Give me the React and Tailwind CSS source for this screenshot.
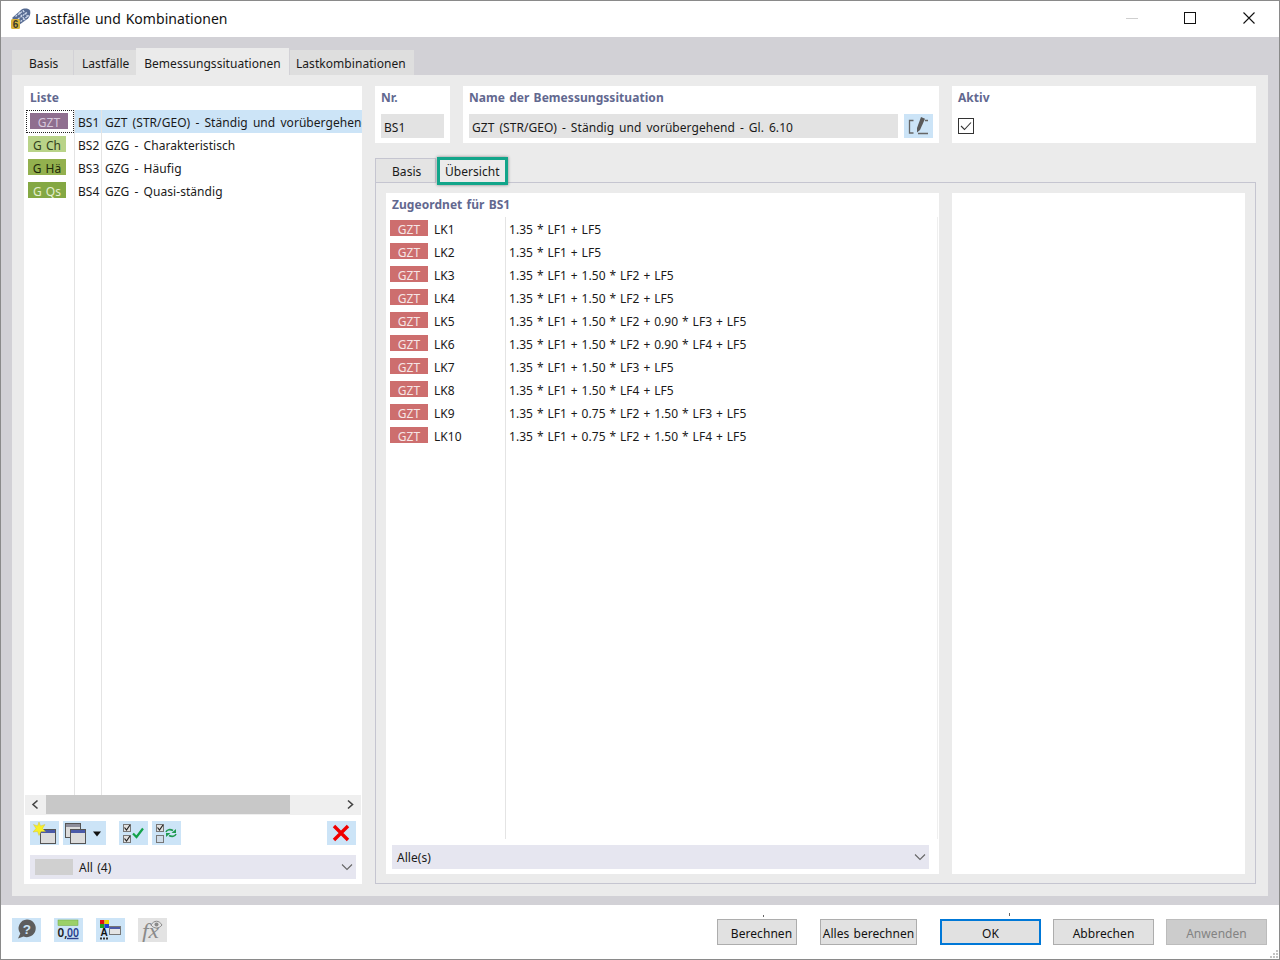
const font = { fontFamily: '"Noto Sans", sans-serif' };

const listRows = [
  { b: "GZT", bg: "bg-[#8f6f8f]", fg: "text-[#d8c8dc]", n: "BS1", t: "GZT (STR/GEO) - Ständig und vorübergehend - Gl. 6.10", sel: true },
  { b: "G Ch", bg: "bg-[#b9d388]", fg: "text-[#33401c]", n: "BS2", t: "GZG - Charakteristisch" },
  { b: "G Hä", bg: "bg-[#93b04e]", fg: "text-[#1f2a0a]", n: "BS3", t: "GZG - Häufig" },
  { b: "G Qs", bg: "bg-[#84a843]", fg: "text-[#e4efd0]", n: "BS4", t: "GZG - Quasi-ständig" },
];

const combos = [
  ["LK1", "1.35 * LF1 + LF5"],
  ["LK2", "1.35 * LF1 + LF5"],
  ["LK3", "1.35 * LF1 + 1.50 * LF2 + LF5"],
  ["LK4", "1.35 * LF1 + 1.50 * LF2 + LF5"],
  ["LK5", "1.35 * LF1 + 1.50 * LF2 + 0.90 * LF3 + LF5"],
  ["LK6", "1.35 * LF1 + 1.50 * LF2 + 0.90 * LF4 + LF5"],
  ["LK7", "1.35 * LF1 + 1.50 * LF3 + LF5"],
  ["LK8", "1.35 * LF1 + 1.50 * LF4 + LF5"],
  ["LK9", "1.35 * LF1 + 0.75 * LF2 + 1.50 * LF3 + LF5"],
  ["LK10", "1.35 * LF1 + 0.75 * LF2 + 1.50 * LF4 + LF5"],
];

function Chevron() {
  return (
    <svg width="12" height="8" viewBox="0 0 12 8" fill="none" stroke="#666" strokeWidth="1.1">
      <path d="M1 1.5 L6 6.5 L11 1.5" />
    </svg>
  );
}

function Win({ x, y, w = 15, h = 14, bar = "#4a5aa8" }) {
  return (
    <g>
      <rect x={x + 0.5} y={y + 0.5} width={w} height={h} fill="#dcdcdc" stroke="#555" />
      <rect x={x + 1} y={y + 1} width={w - 1} height="3" fill={bar} />
    </g>
  );
}

function NewIcon() {
  return (
    <svg width="29" height="24" viewBox="0 0 29 24">
      <Win x={10} y={8} />
      <path d="M9 1 L10.5 5 L15 3.5 L12.5 7.5 L15.5 10.5 L11 10.5 L9 14.5 L7.5 10.5 L3 11 L6 7.5 L3.5 3.5 L7.5 5 Z" fill="#f7f02a" stroke="#d0c020" strokeWidth="0.4" />
    </svg>
  );
}

function CopyIcon() {
  return (
    <svg width="43" height="24" viewBox="0 0 43 24">
      <Win x={2} y={2} bar="#8d8d9a" />
      <Win x={7} y={8} w={15} h={14} />
      <path d="M30 10.5 H38 L34 15.5 Z" fill="#111" />
    </svg>
  );
}

function Box({ x, y, checked }) {
  return (
    <g>
      <rect x={x + 0.5} y={y + 0.5} width="7" height="7" fill={checked ? "#e0e0e0" : "#cfdce8"} stroke="#777" />
      {checked && <path d={`M${x + 1.5} ${y + 3.5} L${x + 3.5} ${y + 6} L${x + 7} ${y + 1}`} fill="none" stroke="#222" strokeWidth="1.2" />}
    </g>
  );
}

function CheckAllIcon() {
  return (
    <svg width="29" height="24" viewBox="0 0 29 24">
      <Box x={4} y={3} checked />
      <Box x={4} y={14} checked />
      <path d="M14 12.5 L17.5 16 L24 7.5" fill="none" stroke="#12a24a" strokeWidth="2.2" />
    </svg>
  );
}

function SwapIcon() {
  return (
    <svg width="29" height="24" viewBox="0 0 29 24">
      <Box x={4} y={3} checked />
      <Box x={4} y={14} />
      <path d="M14 11 C15 8.5 18 8 21 9.5" fill="none" stroke="#1f9a50" strokeWidth="1.6" />
      <path d="M24 8 V12 H19.5 Z" fill="#1f9a50" />
      <path d="M24 13 C23 15.5 20 16 17 14.5" fill="none" stroke="#1f9a50" strokeWidth="1.6" />
      <path d="M14 16 V12 H18.5 Z" fill="#1f9a50" />
    </svg>
  );
}

function DeleteIcon() {
  return (
    <svg width="29" height="24" viewBox="0 0 29 24">
      <path d="M7 5 L21 19 M21 5 L7 19" stroke="#f00000" strokeWidth="3.4" />
    </svg>
  );
}

function EditIcon() {
  return (
    <svg width="29" height="24" viewBox="0 0 29 24">
      <path d="M9.5 6.5 H5.5 V19 H9.5 M14 19.5 H24 M21 6.5 H24" fill="none" stroke="#666" strokeWidth="1.3" />
      <path d="M17 3 L21 4.8 L16 16 L13 18.5 L13 14 Z" fill="#5a5a5a" />
    </svg>
  );
}

function HelpIcon() {
  return (
    <svg width="29" height="24" viewBox="0 0 29 24">
      <path d="M15 1.5 A8.8 8.8 0 1 1 11.5 18.4 L6 20.5 L8.3 15.5 A8.8 8.8 0 0 1 15 1.5 Z" fill="#5d5d5d" />
      <text x="15" y="15.5" textAnchor="middle" fontSize="13.5" fontWeight="700" fill="#cce4f7" fontFamily="Liberation Sans, sans-serif">?</text>
    </svg>
  );
}

function UnitsIcon() {
  return (
    <svg width="29" height="24" viewBox="0 0 29 24">
      <rect x="4" y="2" width="20" height="5.5" fill="#9bd068" stroke="#6ea640" strokeWidth="0.5" />
      <text x="3.5" y="18.5" fontSize="13" fontWeight="600" fill="#222" fontFamily="Noto Sans, sans-serif" textLength="10" lengthAdjust="spacingAndGlyphs">0,</text>
      <text x="13" y="18.5" fontSize="13" fontWeight="600" fill="#2b3f8c" fontFamily="Noto Sans, sans-serif" textLength="12" lengthAdjust="spacingAndGlyphs">00</text>
      <path d="M13 20.5 H24.5" stroke="#2b3f8c" strokeWidth="1.4" />
    </svg>
  );
}

function ColorsIcon() {
  return (
    <svg width="29" height="24" viewBox="0 0 29 24">
      <rect x="4" y="2" width="4.5" height="4" fill="#e01010" />
      <rect x="8.5" y="2" width="4.5" height="4" fill="#e8d800" />
      <rect x="4" y="6" width="4.5" height="4" fill="#20a020" />
      <rect x="8.5" y="6" width="4.5" height="4" fill="#2040d0" />
      <text x="4.5" y="18" fontSize="10" fontWeight="700" fill="#111" fontFamily="Liberation Sans, sans-serif">A</text>
      <path d="M4 20.5 H13" stroke="#333" strokeWidth="2" strokeDasharray="2 1" />
      <rect x="13.5" y="8.5" width="11" height="8" fill="#e4e4e4" stroke="#777" />
      <rect x="14" y="9" width="10" height="2" fill="#4a5aa8" />
    </svg>
  );
}

function FxIcon() {
  return (
    <svg width="29" height="24" viewBox="0 0 29 24">
      <text x="4" y="20" fontSize="20" fontStyle="italic" fill="#8a8a8a" fontFamily="Liberation Serif, serif" textLength="17" lengthAdjust="spacingAndGlyphs">fx</text>
      <path d="M13 7 C16 2 21 2 24 7 C21 11 16 11 13 7 Z" fill="none" stroke="#8a8a8a" />
      <circle cx="18.5" cy="6.5" r="2" fill="#8a8a8a" />
    </svg>
  );
}

function AppIcon() {
  return (
    <svg width="22" height="22" viewBox="0 0 22 22">
      <path d="M3 10 L12 2 C14.5 0 19.5 0 21 2.5 C22 5.5 20.5 9 19 10.5 L10 17 Z" fill="#566b92" />
      <path d="M6.5 8.5 L14.5 2.5 M9 11 L18 4.5 M11.5 13.5 L20 7.5 M10 4.5 L16 12 M14 2.5 L19.5 9.5" stroke="#cdd8ea" strokeWidth="1.3" strokeDasharray="2 1" />
      <rect x="2" y="11" width="9" height="10" rx="1.5" fill="#d8b23a" />
      <text x="6.5" y="19.5" textAnchor="middle" fontSize="10" fontWeight="700" fill="#3a3a2a" fontFamily="Liberation Sans, sans-serif">6</text>
    </svg>
  );
}

function IconBtn({ children, w = "w-[29px]", gray }) {
  return <div className={`${w} h-6 flex items-center justify-center ${gray ? "bg-[#e3e3e3]" : "bg-[#cce4f7]"}`}>{children}</div>;
}

function Label({ children, className = "" }) {
  return <div className={`font-bold text-[12px] leading-[18px] text-[#62688f] ${className}`}>{children}</div>;
}

function FootBtn({ children, w, kind, pad = "" }) {
  const base = "h-[26px] flex items-center justify-center whitespace-nowrap pt-[4px] ";
  const styles =
    kind === "ok"
      ? "border-2 border-[#0078d7] bg-[#e1e1e1] text-[#111]"
      : kind === "off"
      ? "border border-[#bcbcbc] bg-[#cccccc] text-[#838383]"
      : "border border-[#adadad] bg-[#e1e1e1] text-[#111]";
  return <div className={`${base}${styles} ${w} ${pad}`}>{children}</div>;
}

export default function App() {
  return (
    <div style={font} className="w-[1280px] h-[960px] bg-white border border-[#8a8a8a] flex flex-col overflow-hidden text-[12px] leading-[18px] tracking-[0.05px] [word-spacing:1px] text-[#1a1a1a]">
      {/* Title bar */}
      <div className="h-[36px] shrink-0 flex items-center bg-white">
        <div className="ml-[8px] w-[22px] h-[22px]"><AppIcon /></div>
        <div className="ml-[4px] text-[14px] text-[#111] -mt-[1px]">Lastfälle und Kombinationen</div>
        <div className="ml-auto flex items-center -mt-[2px]">
          <div className="w-[12px] h-px bg-[#cfcfcf] mr-[46px]" />
          <div className="w-[12px] h-[12px] border-[1.5px] border-[#111] mr-[47px]" />
          <svg className="mr-[24px]" width="12" height="12" viewBox="0 0 12 12" stroke="#111" strokeWidth="1.1"><path d="M0.5 0.5 L11.5 11.5 M11.5 0.5 L0.5 11.5" /></svg>
        </div>
      </div>

      {/* Main gray band */}
      <div className="h-[868px] shrink-0 bg-[#d2d1d6] px-[11px] pt-[11px] pr-[11px] flex flex-col">
        {/* Tabs */}
        <div className="flex items-end h-[27px] shrink-0">
          <div className="w-[61px] h-[25px] bg-[#dedede] flex items-center pl-[17px] pt-[3px]">Basis</div>
          <div className="w-[62px] ml-px h-[25px] bg-[#dedede] flex items-center pl-[8px] pt-[3px]">Lastfälle</div>
          <div className="w-[153px] h-[27px] bg-[#ebebeb] flex items-center justify-center pt-[4px]">Bemessungssituationen</div>
          <div className="w-[124px] ml-px h-[25px] bg-[#dedede] flex items-center pl-[6px] pt-[3px]">Lastkombinationen</div>
        </div>
        {/* Panel */}
        <div className="w-[1256px] h-[821px] bg-[#ebebeb] pl-[12px] pt-[11px] flex gap-[13px]">
          {/* Liste */}
          <div className="w-[338px] h-[798px] bg-white flex flex-col">
            <Label className="ml-[6px] pt-[3px] h-[24px] shrink-0">Liste</Label>
            <div className="relative flex-1 min-h-0 overflow-hidden flex ml-0">
              <div className="w-[51px] border-r border-[#e4e4e4] shrink-0 flex flex-col">
                {listRows.map((r) => (
                  <div key={r.n} className={`h-[23px] flex items-start pt-[3px] pl-[4px] ${r.sel ? "outline-1 outline-dotted outline-[#222] -outline-offset-1 w-[48px] ml-[2px] pl-[2px]" : ""}`}>
                    <div className={`w-[38px] h-[16px] flex items-start justify-center pt-px ${r.bg} ${r.fg}`}>{r.b}</div>
                  </div>
                ))}
              </div>
              <div className="flex-1 min-w-0 flex flex-col relative">
                {listRows.map((r) => (
                  <div key={r.n} className={`h-[23px] flex items-center whitespace-nowrap overflow-hidden ${r.sel ? "bg-[#cce4f7]" : ""}`}>
                    <div className="w-[27px] shrink-0 pl-[3px] pt-[3px] border-r border-[#e4e4e4] h-full flex items-center">{r.n}</div>
                    <div className="pl-[3px] pt-[3px] [word-spacing:2px]">{r.t}</div>
                  </div>
                ))}
                <div className="flex-1 w-[27px] border-r border-[#e4e4e4]" />
              </div>
            </div>
            {/* scrollbar */}
            <div className="h-[20px] shrink-0 mx-px bg-[#efefef] flex items-start mb-[6px]">
              <svg width="21" height="20" viewBox="0 0 21 20" fill="none" stroke="#444" strokeWidth="1.6"><path d="M12.5 5.5 L8 9.5 L12.5 13.5" /></svg>
              <div className="w-[244px] h-[19px] bg-[#c8c8c8]" />
              <svg className="ml-auto" width="21" height="20" viewBox="0 0 21 20" fill="none" stroke="#444" strokeWidth="1.6"><path d="M8 5.5 L12.5 9.5 L8 13.5" /></svg>
            </div>
            {/* toolbar */}
            <div className="h-[24px] shrink-0 flex items-center ml-[6px] mr-[6px]">
              <IconBtn><NewIcon /></IconBtn>
              <div className="ml-[4px]"><IconBtn w="w-[43px]"><CopyIcon /></IconBtn></div>
              <div className="ml-[13px]"><IconBtn><CheckAllIcon /></IconBtn></div>
              <div className="ml-[4px]"><IconBtn><SwapIcon /></IconBtn></div>
              <div className="ml-auto"><IconBtn><DeleteIcon /></IconBtn></div>
            </div>
            {/* combo */}
            <div className="h-[24px] shrink-0 mt-[10px] mx-[6px] mb-[5px] bg-[#e6e6f0] flex items-center pl-[5px] pr-[3px]">
              <div className="w-[38px] h-[16px] bg-[#d0d0d0]" />
              <div className="ml-[6px] pt-px">All (4)</div>
              <div className="ml-auto flex"><Chevron /></div>
            </div>
          </div>

          {/* Right */}
          <div className="w-[881px] flex flex-col">
            <div className="flex gap-[13px] h-[57px] shrink-0">
              <div className="w-[75px] bg-white px-[6px] pt-[3px]">
                <Label className="h-[25px]">Nr.</Label>
                <div className="w-[63px] h-[24px] bg-[#e3e3e3] flex items-center pl-[3px] pt-[4px]">BS1</div>
              </div>
              <div className="w-[476px] bg-white px-[6px] pt-[3px]">
                <Label className="h-[25px]">Name der Bemessungssituation</Label>
                <div className="flex">
                  <div className="w-[429px] h-[24px] bg-[#e3e3e3] flex items-center pl-[3px] pt-[4px] [word-spacing:1.8px]">GZT (STR/GEO) - Ständig und vorübergehend - Gl. 6.10</div>
                  <div className="ml-[6px]"><IconBtn><EditIcon /></IconBtn></div>
                </div>
              </div>
              <div className="w-[304px] bg-white px-[6px] pt-[3px]">
                <Label className="h-[29px]">Aktiv</Label>
                <div className="w-[16px] h-[16px] border border-[#333] flex items-center justify-center">
                  <svg width="12" height="10" viewBox="0 0 12 10" fill="none" stroke="#333" strokeWidth="1.1"><path d="M1 5 L4.5 8.5 L11 1.5" /></svg>
                </div>
              </div>
            </div>

            {/* Sub tabs */}
            <div className="flex h-[25px] mt-[15px] shrink-0 relative z-10">
              <div className="w-[61px] h-[25px] bg-[#e4e4e4] border border-[#c5c5d0] flex items-center pl-[16px] pt-[3px]">Basis</div>
              <div className="relative w-[72px] h-[25px] bg-[#ebebeb] flex items-center pl-[9px] pt-[3px] text-[#1a1a1a]">
                Übersicht
                <div className="absolute left-[1px] top-[-1px] w-[71px] h-[28px] border-[3px] border-[#12a58a] shadow-[0_0_3px_rgba(0,0,0,0.45)]" />
              </div>
            </div>
            <div className="w-[881px] h-[702px] -mt-px border border-[#c5c5d0] pl-[10px] pt-[10px] flex gap-[13px]">
              <div className="w-[553px] h-[681px] bg-white flex flex-col pl-[4px]">
                <Label className="ml-[2px] h-[24px] shrink-0 pt-[3px]">Zugeordnet für BS1</Label>
                <div className="flex-1 min-h-0 flex">
                  <div className="w-[116px] border-r border-[#e4e4e4] shrink-0 h-[622px]">
                    {combos.map(([k]) => (
                      <div key={k} className="h-[23px] flex items-start pt-[3px]">
                        <div className="w-[38px] h-[16px] bg-[#cd6e6e] text-[#f6e6e6] flex items-start justify-center pt-px">GZT</div>
                        <div className="ml-[6px] mt-px">{k}</div>
                      </div>
                    ))}
                  </div>
                  <div className="flex-1 flex">
                    <div className="flex-1 pl-[3px]">
                      {combos.map(([k, f]) => (
                        <div key={k} className="h-[23px] flex items-center pt-[3px] whitespace-pre [word-spacing:0.7px]">{f}</div>
                      ))}
                    </div>
                    <div className="w-px h-[622px] bg-[#efefef] mr-px" />
                  </div>
                </div>
                <div className="h-[24px] shrink-0 mb-[5px] ml-[2px] mr-[10px] bg-[#e6e6f0] flex items-center pl-[5px] pt-[2px] pr-[3px]">
                  Alle(s)
                  <div className="ml-auto flex -mt-[2px]"><Chevron /></div>
                </div>
              </div>
              <div className="w-[293px] h-[681px] bg-white" />
            </div>
          </div>
        </div>
      </div>

      {/* Footer */}
      <div className="flex-1 bg-white flex items-start pt-[13px] pl-[11px] relative">
        <IconBtn><HelpIcon /></IconBtn>
        <div className="ml-[13px]"><IconBtn><UnitsIcon /></IconBtn></div>
        <div className="ml-[13px]"><IconBtn><ColorsIcon /></IconBtn></div>
        <div className="ml-[13px]"><IconBtn gray><FxIcon /></IconBtn></div>
        <div className="ml-[550px] mt-px flex">
          <FootBtn w="w-[80px]" pad="pl-[9px]">Berechnen</FootBtn>
          <div className="ml-[23px]"><FootBtn w="w-[97px]">Alles berechnen</FootBtn></div>
          <div className="ml-[23px]"><FootBtn w="w-[101px]" kind="ok">OK</FootBtn></div>
          <div className="ml-[12px]"><FootBtn w="w-[101px]">Abbrechen</FootBtn></div>
          <div className="ml-[12px]"><FootBtn w="w-[101px]" kind="off">Anwenden</FootBtn></div>
        </div>
        <div className="absolute left-[762px] top-[10px] w-px h-[2px] bg-[#666]" />
        <div className="absolute left-[1008px] top-[8px] w-px h-[3px] bg-[#666]" />
        <svg className="absolute right-0 bottom-0" width="10" height="10" viewBox="0 0 10 10" fill="#c4c4c4">
          <rect x="7" y="1" width="2" height="2" /><rect x="4" y="4" width="2" height="2" /><rect x="7" y="4" width="2" height="2" />
          <rect x="1" y="7" width="2" height="2" /><rect x="4" y="7" width="2" height="2" /><rect x="7" y="7" width="2" height="2" />
        </svg>
      </div>
    </div>
  );
}
